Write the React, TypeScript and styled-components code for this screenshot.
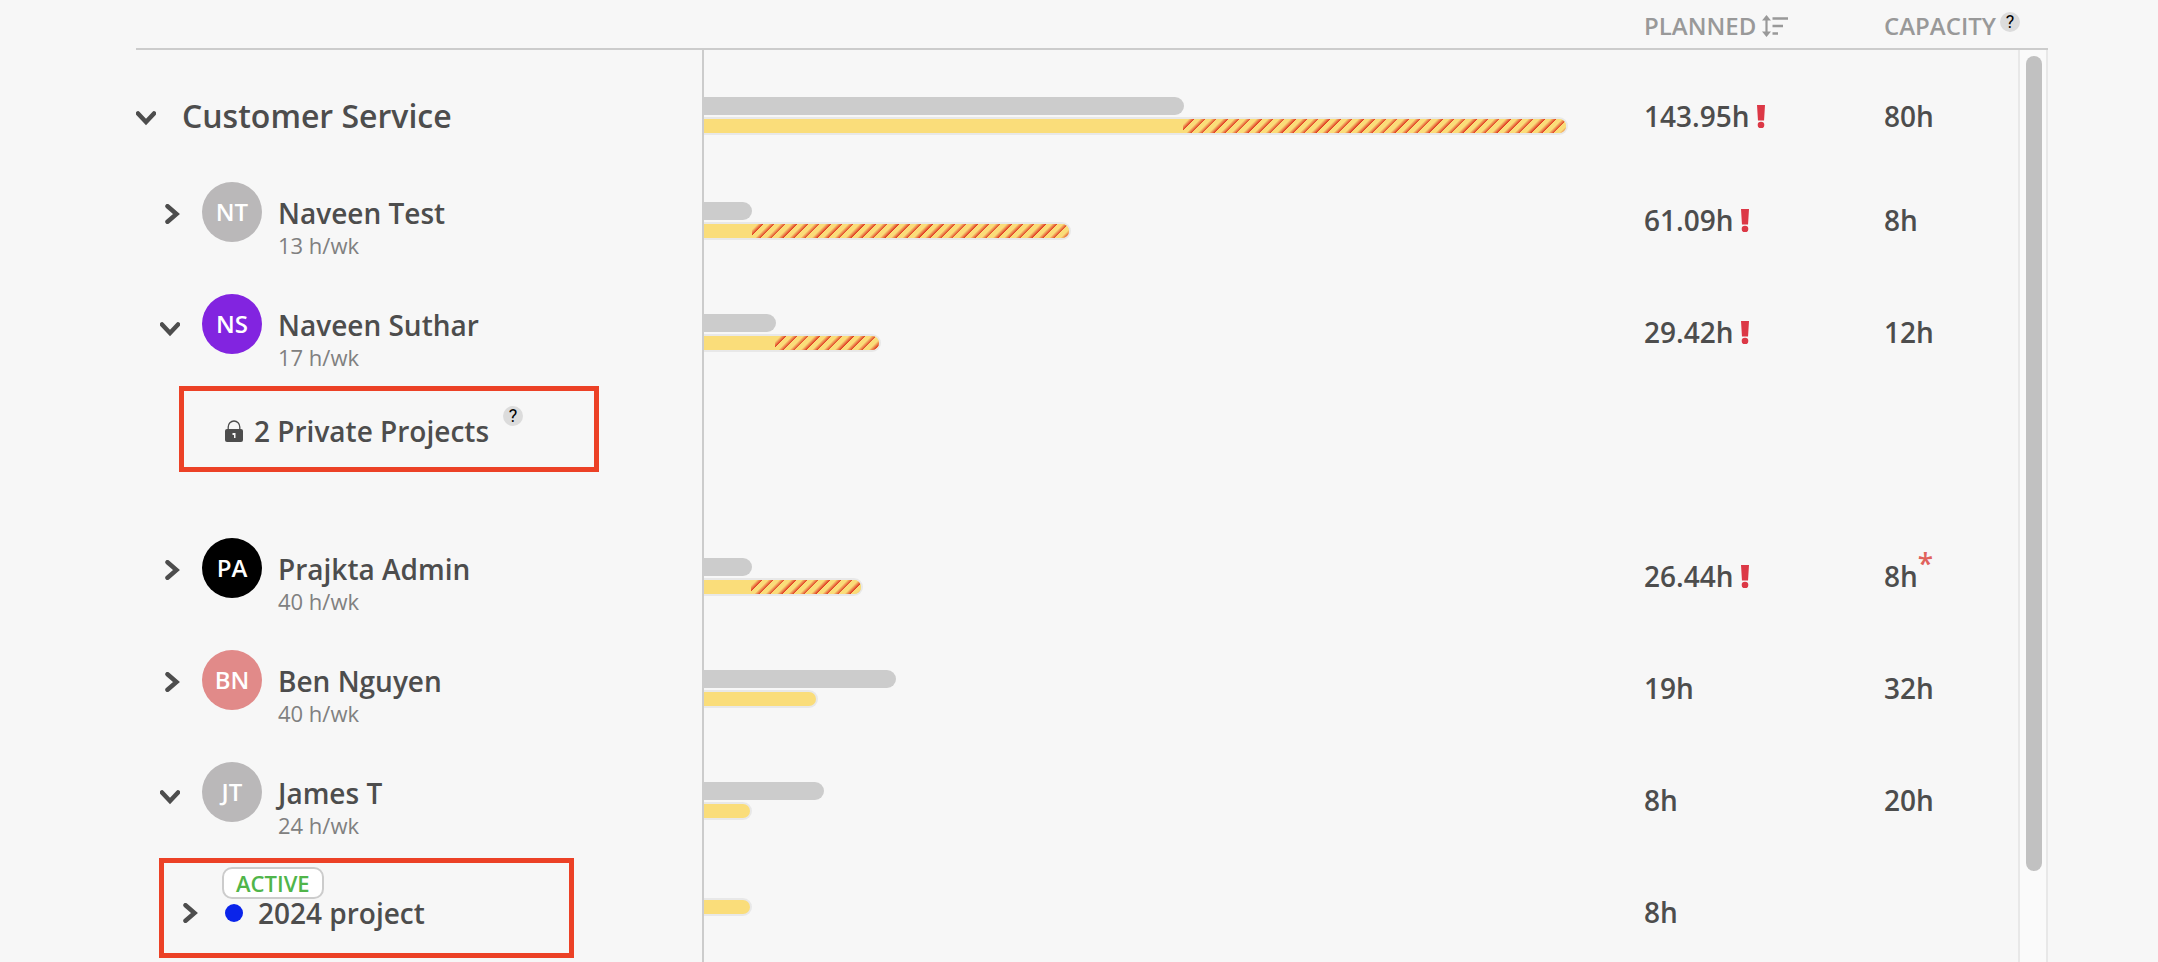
import React from "react";
import styled, { createGlobalStyle, css } from "styled-components";

const GlobalStyle = createGlobalStyle`
  *, *::before, *::after { box-sizing: border-box; }
  body {
    margin: 0;
    background: #f7f7f7;
    color: #4d4d4d;
    font-family: "Open Sans", "Noto Sans", sans-serif;
  }
`;

const TRACK_WIDTH = 30;

const Panel = styled.main`
  display: grid;
  grid-template-columns: minmax(0, 1fr) ${TRACK_WIDTH}px;
  height: 100vh;
  padding: 0 110px 0 136px;
  overflow: hidden;
`;

const Table = styled.table`
  display: flex;
  flex-direction: column;
  min-height: 0;
`;

const gridColumns = css`
  display: grid;
  grid-template-columns: 568px minmax(0, 1fr) 240px 134px;
`;

const Head = styled.thead`
  display: block;
`;

const HeadRow = styled.tr`
  ${gridColumns}
  height: 50px;
  border-bottom: 2px solid #cccccc;
`;

const HeadCell = styled.th`
  display: flex;
  align-items: center;
  gap: 6px;
  padding: 4px 0 0;
  color: #999999;
  font-size: 24px;
  font-weight: 600;
  line-height: 32px;
  white-space: nowrap;
`;

const SortButton = styled.button`
  display: flex;
  padding: 0;
  border: 0;
  background: none;
  color: inherit;
  cursor: pointer;
`;

const Body = styled.tbody`
  display: block;
`;

type RowKind = "group" | "person" | "private" | "project";

const Row = styled.tr<{ $kind: RowKind }>`
  ${gridColumns}
  height: ${({ $kind }) => ($kind === "private" ? 132 : 112)}px;
`;

const NameCell = styled.th`
  display: block;
  padding: 0;
  border-right: 2px solid #cccccc;
  font-weight: 600;
  text-align: left;
`;

const barTop = { group: 20, person: 6, private: 0, project: 0 };
const valueTop = { group: 20, person: 4, private: 0, project: 4 };

const BarCell = styled.td<{ $kind: RowKind }>`
  display: flex;
  flex-direction: column;
  justify-content: center;
  gap: 2px;
  padding: ${({ $kind }) => barTop[$kind]}px 76px ${({ $kind }) => ($kind === "project" ? 6 : 0)}px 0;
`;

const ValueCell = styled.td<{ $kind: RowKind }>`
  display: flex;
  align-items: center;
  gap: 7px;
  padding: ${({ $kind }) => valueTop[$kind]}px 0 0;
  font-size: 28px;
  font-weight: 600;
  line-height: 38px;
`;

const CapacityBar = styled.div`
  height: 18px;
  border-radius: 0 9px 9px 0;
  background: #cccccc;
`;

const PlannedBar = styled.div`
  display: flex;
  height: 18px;
  border: 2px solid #e8e8e8;
  border-left: 0;
  border-radius: 0 9px 9px 0;
  background: #fadd7a;
  overflow: hidden;
`;

const Overrun = styled.div`
  margin-left: auto;
  background: repeating-linear-gradient(
    135deg,
    #fadd7a 0,
    #fadd7a 4px,
    #e03a22 8px
  );
`;

const GroupLine = styled.div`
  display: flex;
  align-items: center;
  gap: 26px;
  height: 112px;
  padding-top: 20px;
  font-size: 32px;
  line-height: 44px;
`;

const PersonLine = styled.div`
  display: flex;
  align-items: flex-start;
  padding: 20px 0 0 24px;
`;

const Toggle = styled.button<{ $drop?: number }>`
  display: flex;
  align-items: center;
  justify-content: flex-end;
  width: 20px;
  height: 60px;
  padding: ${({ $drop = 4 }) => $drop}px 0 0;
  border: 0;
  background: none;
  color: #4d4d4d;
  cursor: pointer;
`;

const Avatar = styled.span<{ $color: string }>`
  display: flex;
  align-items: center;
  justify-content: center;
  width: 60px;
  height: 60px;
  margin: 0 16px 0 22px;
  padding-bottom: 2px;
  border-radius: 50%;
  background: ${({ $color }) => $color};
  color: #ffffff;
  font-size: 24px;
`;

const PersonText = styled.div`
  display: flex;
  flex-direction: column;
  padding-top: 12px;
`;

const Name = styled.span`
  font-size: 28px;
  line-height: 38px;
  white-space: nowrap;
`;

const Hours = styled.span`
  color: #808080;
  font-size: 22px;
  font-weight: 400;
  line-height: 26px;
`;

const PrivateBox = styled.div`
  display: flex;
  align-items: center;
  width: 420px;
  height: 86px;
  margin-left: 43px;
  padding: 3px 0 0 41px;
  border: 5px solid #ec4126;
`;

const PrivateName = styled(Name)`
  margin: 0 14px 0 11px;
`;

const ProjectBox = styled.div`
  display: flex;
  align-items: flex-end;
  width: 415px;
  height: 100px;
  margin: 4px 0 0 23px;
  padding: 0 0 26px 14px;
  border: 5px solid #ec4126;
`;

const ProjectToggle = styled(Toggle)`
  height: 28px;
  margin-right: 24px;
`;

const ProjectText = styled.div`
  display: flex;
  flex-direction: column;
  align-items: flex-start;
`;

const ProjectLine = styled.div`
  display: flex;
  align-items: center;
  gap: 15px;
  height: 28px;
  padding-left: 3px;
`;

const Status = styled.span`
  padding: 0 12px;
  border: 2px solid #cccccc;
  border-radius: 10px;
  background: #ffffff;
  color: #50b54a;
  font-size: 22px;
  line-height: 28px;
`;

const Dot = styled.span`
  width: 18px;
  height: 18px;
  border-radius: 50%;
  background: #0a24ea;
`;

const Help = styled.button`
  flex: none;
  width: 20px;
  height: 20px;
  padding: 0;
  border: 0;
  border-radius: 50%;
  background: #dcdcdc;
  color: #000000;
  font-family: Roboto, sans-serif;
  font-size: 18px;
  font-weight: 400;
  line-height: 20px;
  text-align: center;
  align-self: flex-start;
  cursor: pointer;
`;

const HeadHelp = styled(Help)`
  margin: 8px 0 0 -2px;
`;

const PrivateHelp = styled(Help)`
  margin-top: 12px;
`;

const Note = styled.sup`
  align-self: flex-start;
  margin: 22px 0 0 -7px;
  color: #e0625c;
  font-size: 28px;
  line-height: 38px;
`;

const Track = styled.div`
  display: flex;
  flex-direction: column;
  min-height: 0;
`;

const TrackHead = styled.div`
  flex: none;
  height: 50px;
  border-bottom: 2px solid #cccccc;
`;

const TrackBody = styled.div`
  flex: 1;
  padding: 6px 4px 0 6px;
  border: solid #e8e8e8;
  border-width: 0 2px;
  background: #fafafa;
`;

const Thumb = styled.div`
  height: 90%;
  border-radius: 8px;
  background: #c1c1c1;
`;

const ChevronDown = () => (
  <svg width="20" height="16" viewBox="0 0 20 16" fill="none" aria-hidden="true">
    <path d="M2 3.500 10 12 18 3.500" stroke="currentColor" strokeWidth="4.500" strokeLinecap="round" />
  </svg>
);

const ChevronRight = () => (
  <svg width="15" height="20" viewBox="0 0 15 20" fill="none" aria-hidden="true">
    <path d="M2.500 2.200 11.500 10 2.500 17.800" stroke="currentColor" strokeWidth="4.500" strokeLinecap="round" />
  </svg>
);

const SortIcon = () => (
  <svg width="26" height="22" viewBox="0 0 26 22" fill="none" aria-hidden="true">
    <path d="M4.500 3v16" stroke="currentColor" strokeWidth="2.200" />
    <path d="M4.500 0 9 5.500H0zM4.500 22 9 16.500H0z" fill="currentColor" />
    <path d="M10.500 3.500H26M10.500 11h10.500M10.500 18.500h5.500" stroke="currentColor" strokeWidth="2.500" />
  </svg>
);

const LockIcon = () => (
  <svg width="18" height="22" viewBox="0 0 18 22" fill="none" aria-hidden="true">
    <path d="M3.200 10V7a5.800 6 0 0 1 11.600 0v3" stroke="#4d4d4d" strokeWidth="1.300" />
    <rect y="9" width="18" height="13" rx="2" fill="#4d4d4d" />
    <path d="M7.500 13h3v5h-1.500v-3h-1.500z" fill="#f7f7f7" />
  </svg>
);

const AlertIcon = () => (
  <svg width="8" height="23" viewBox="0 0 8 23" role="img" aria-label="Over capacity">
    <path d="M0 0h8L7 15.500H1z" fill="#dc3846" />
    <circle cx="4" cy="20" r="3.300" fill="#dc3846" />
  </svg>
);

interface RowData {
  kind: RowKind;
  name: string;
  open?: boolean;
  initials?: string;
  color?: string;
  weekly?: string;
  planned?: number;
  capacity?: number;
  note?: boolean;
}

const rows: RowData[] = [
  { kind: "group", name: "Customer Service", open: true, planned: 143.95, capacity: 80 },
  { kind: "person", name: "Naveen Test", initials: "NT", color: "#bab8b9", weekly: "13 h/wk", planned: 61.09, capacity: 8 },
  { kind: "person", name: "Naveen Suthar", open: true, initials: "NS", color: "#8224e0", weekly: "17 h/wk", planned: 29.42, capacity: 12 },
  { kind: "private", name: "2 Private Projects" },
  { kind: "person", name: "Prajkta Admin", initials: "PA", color: "#000000", weekly: "40 h/wk", planned: 26.44, capacity: 8, note: true },
  { kind: "person", name: "Ben Nguyen", initials: "BN", color: "#e18a89", weekly: "40 h/wk", planned: 19, capacity: 32 },
  { kind: "person", name: "James T", open: true, initials: "JT", color: "#bab8b9", weekly: "24 h/wk", planned: 8, capacity: 20 },
  { kind: "project", name: "2024 project", planned: 8 },
];

const maxHours = Math.max(...rows.map((row) => row.planned ?? 0));
const share = (part: number, whole: number) => `${(part / whole) * 100}%`;

function RowLabel({ row }: { row: RowData }) {
  const chevron = row.open ? <ChevronDown /> : <ChevronRight />;
  const label = `${row.open ? "Collapse" : "Expand"} ${row.name}`;

  if (row.kind === "group") {
    return (
      <GroupLine>
        <Toggle aria-label={label} aria-expanded={row.open}>{chevron}</Toggle>
        {row.name}
      </GroupLine>
    );
  }
  if (row.kind === "private") {
    return (
      <PrivateBox>
        <LockIcon />
        <PrivateName>{row.name}</PrivateName>
        <PrivateHelp aria-label="About private projects">?</PrivateHelp>
      </PrivateBox>
    );
  }
  if (row.kind === "project") {
    return (
      <ProjectBox>
        <ProjectToggle $drop={0} aria-label={label} aria-expanded={false}>{chevron}</ProjectToggle>
        <ProjectText>
          <Status>ACTIVE</Status>
          <ProjectLine>
            <Dot />
            <Name>{row.name}</Name>
          </ProjectLine>
        </ProjectText>
      </ProjectBox>
    );
  }
  return (
    <PersonLine>
      <Toggle $drop={row.open ? 10 : 4} aria-label={label} aria-expanded={!!row.open}>{chevron}</Toggle>
      <Avatar $color={row.color ?? "#bab8b9"}>{row.initials}</Avatar>
      <PersonText>
        <Name>{row.name}</Name>
        <Hours>{row.weekly}</Hours>
      </PersonText>
    </PersonLine>
  );
}

function WorkloadRow({ row }: { row: RowData }) {
  const { kind, planned, capacity } = row;
  const over = planned && capacity && planned > capacity ? planned - capacity : 0;
  return (
    <Row $kind={kind}>
      <NameCell scope="row">
        <RowLabel row={row} />
      </NameCell>
      <BarCell $kind={kind}>
        {capacity && <CapacityBar style={{ width: share(capacity, maxHours) }} />}
        {planned && (
          <PlannedBar style={{ width: share(planned, maxHours) }}>
            {over > 0 && <Overrun style={{ width: share(over, planned) }} />}
          </PlannedBar>
        )}
      </BarCell>
      <ValueCell $kind={kind}>
        {planned && `${planned}h`}
        {over > 0 && <AlertIcon />}
      </ValueCell>
      <ValueCell $kind={kind}>
        {capacity && `${capacity}h`}
        {row.note && <Note>*</Note>}
      </ValueCell>
    </Row>
  );
}

export default function App() {
  return (
    <>
      <GlobalStyle />
      <Panel>
        <Table>
          <Head>
            <HeadRow>
              <HeadCell scope="col" aria-label="Name" />
              <HeadCell scope="col" aria-label="Workload" />
              <HeadCell scope="col">
                PLANNED
                <SortButton aria-label="Sort by planned hours"><SortIcon /></SortButton>
              </HeadCell>
              <HeadCell scope="col">
                CAPACITY
                <HeadHelp aria-label="About capacity">?</HeadHelp>
              </HeadCell>
            </HeadRow>
          </Head>
          <Body>
            {rows.map((row) => (
              <WorkloadRow key={row.name} row={row} />
            ))}
          </Body>
        </Table>
        <Track aria-hidden="true">
          <TrackHead />
          <TrackBody>
            <Thumb />
          </TrackBody>
        </Track>
      </Panel>
    </>
  );
}
